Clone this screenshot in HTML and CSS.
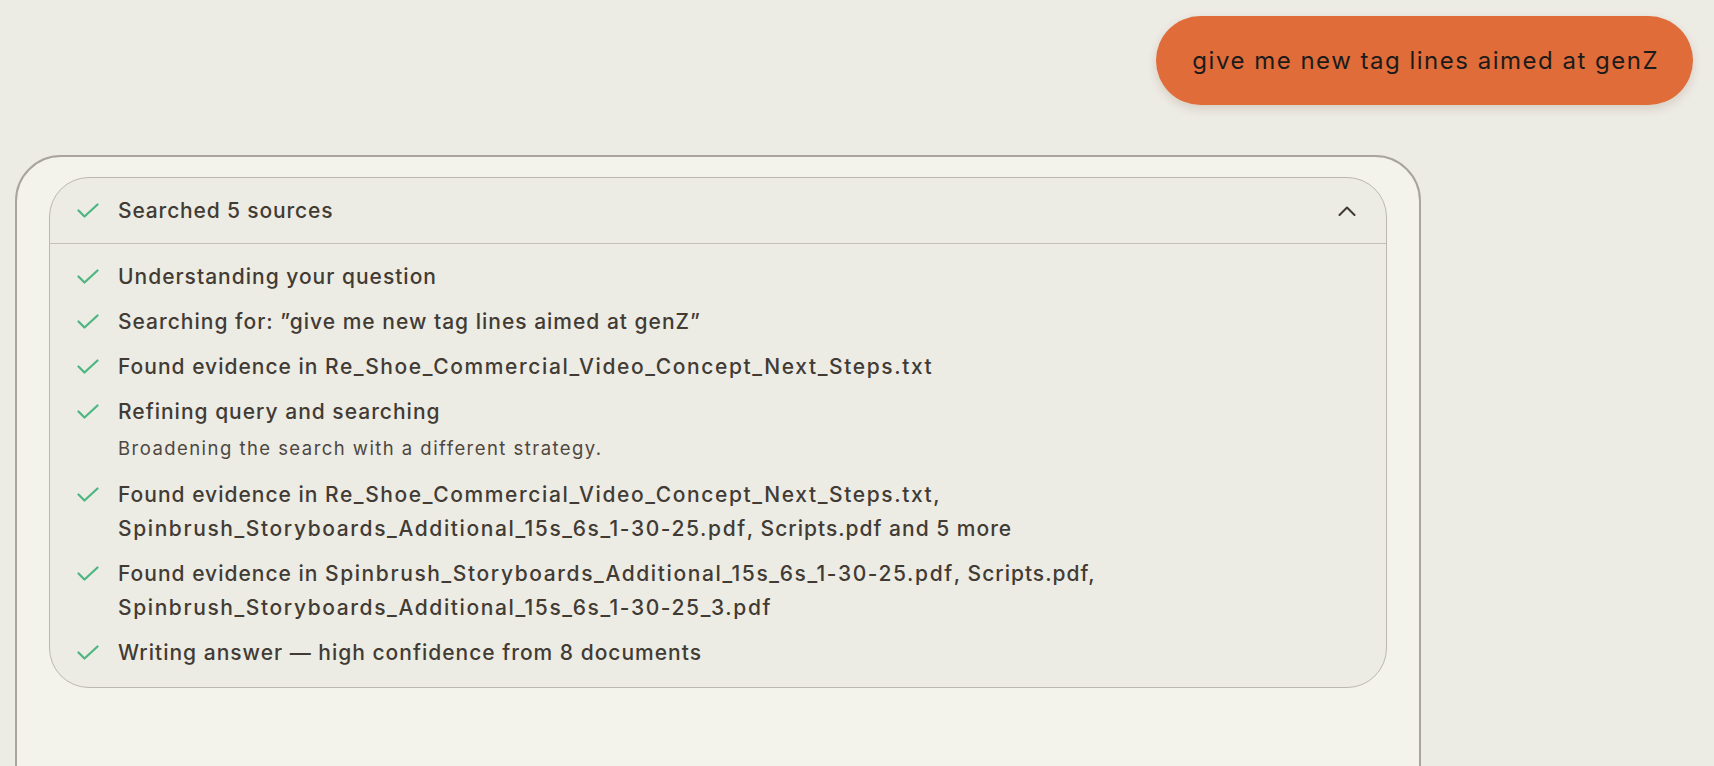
FILE: index.html
```html
<!DOCTYPE html>
<html lang="en">
<head>
<meta charset="utf-8">
<title>Chat</title>
<link rel="stylesheet" href="styles.css">
</head>
<body>
<div class="page">
  <div class="user-row">
    <div class="bubble">give me new tag lines aimed at genZ</div>
  </div>
  <div class="answer-card">
    <div class="steps">
      <div class="steps-head">
        <svg class="check" viewBox="0 0 22 16" width="22" height="16"><path d="M1.5 7.5 L7.5 13.5 L20.5 1.5"/></svg>
        <span class="head-title">Searched 5 sources</span>
        <svg class="chev" viewBox="0 0 18 10" width="18" height="10"><path d="M1.5 9 L9 1.5 L16.5 9"/></svg>
      </div>
      <ul class="step-list">
        <li class="step">
          <svg class="check" viewBox="0 0 22 16" width="22" height="16"><path d="M1.5 7.5 L7.5 13.5 L20.5 1.5"/></svg>
          <div class="step-body"><div class="step-text">Understanding your question</div></div>
        </li>
        <li class="step">
          <svg class="check" viewBox="0 0 22 16" width="22" height="16"><path d="M1.5 7.5 L7.5 13.5 L20.5 1.5"/></svg>
          <div class="step-body"><div class="step-text">Searching for: ”give me new tag lines aimed at genZ”</div></div>
        </li>
        <li class="step">
          <svg class="check" viewBox="0 0 22 16" width="22" height="16"><path d="M1.5 7.5 L7.5 13.5 L20.5 1.5"/></svg>
          <div class="step-body"><div class="step-text">Found evidence in <span class="file">Re_Shoe_Commercial_Video_Concept_Next_Steps.txt</span></div></div>
        </li>
        <li class="step">
          <svg class="check" viewBox="0 0 22 16" width="22" height="16"><path d="M1.5 7.5 L7.5 13.5 L20.5 1.5"/></svg>
          <div class="step-body">
            <div class="step-text">Refining query and searching</div>
            <div class="step-sub">Broadening the search with a different strategy.</div>
          </div>
        </li>
        <li class="step">
          <svg class="check" viewBox="0 0 22 16" width="22" height="16"><path d="M1.5 7.5 L7.5 13.5 L20.5 1.5"/></svg>
          <div class="step-body"><div class="step-text">Found evidence in <span class="file">Re_Shoe_Commercial_Video_Concept_Next_Steps.txt</span>,<br><span class="file">Spinbrush_Storyboards_Additional_15s_6s_1-30-25.pdf</span>, Scripts.pdf and 5 more</div></div>
        </li>
        <li class="step">
          <svg class="check" viewBox="0 0 22 16" width="22" height="16"><path d="M1.5 7.5 L7.5 13.5 L20.5 1.5"/></svg>
          <div class="step-body"><div class="step-text">Found evidence in <span class="file">Spinbrush_Storyboards_Additional_15s_6s_1-30-25.pdf</span>, Scripts.pdf,<br><span class="file">Spinbrush_Storyboards_Additional_15s_6s_1-30-25_3.pdf</span></div></div>
        </li>
        <li class="step">
          <svg class="check" viewBox="0 0 22 16" width="22" height="16"><path d="M1.5 7.5 L7.5 13.5 L20.5 1.5"/></svg>
          <div class="step-body"><div class="step-text">Writing answer — high confidence from 8 documents</div></div>
        </li>
      </ul>
    </div>
  </div>
</div>
</body>
</html>
```

FILE: styles.css
```css
* { box-sizing: border-box; }
html, body {
  margin: 0;
  padding: 0;
  background: #ecebe4;
  height: 100%;
  overflow: hidden;
}
body {
  font-family: Inter, "Noto Sans", sans-serif;
  color: #423b34;
}
.page {
  display: flex;
  flex-direction: column;
  padding: 16px 21px 0 15px;
}
.user-row {
  display: flex;
  justify-content: flex-end;
}
.bubble {
  background: #e06c39;
  color: #1d1b19;
  font-size: 24px;
  height: 89px;
  line-height: 89px;
  padding: 0 34px 0 36px;
  border-radius: 45px;
  box-shadow: 0 4px 10px rgba(120, 80, 50, 0.18);
  letter-spacing: 1.5px;
}
.answer-card {
  margin-top: 50px;
  width: 1406px;
  min-height: 700px;
  background: #f3f2eb;
  border: 2px solid #a9a59d;
  border-radius: 46px;
  padding: 20px 32px;
}
.steps {
  background: #ecebe4;
  border: 1.5px solid #bcb8b0;
  border-radius: 40px;
}
.steps-head {
  display: flex;
  align-items: center;
  height: 66px;
  padding: 0 30px 0 27px;
  border-bottom: 1.5px solid #c4c0b7;
}
.head-title {
  flex: 1;
  font-size: 21px;
  font-weight: 500;
  letter-spacing: 0.85px;
  margin-left: 19px;
}
.check {
  flex: none;
  fill: none;
  stroke: #4cb680;
  stroke-width: 2.2;
  stroke-linecap: round;
  stroke-linejoin: round;
}
.chev {
  fill: none;
  stroke: #3f3832;
  stroke-width: 2;
  stroke-linecap: round;
  stroke-linejoin: round;
}
.step-list {
  list-style: none;
  margin: 0;
  padding: 16px 0 17px 27px;
  display: flex;
  flex-direction: column;
  gap: 11px;
}
.step {
  display: flex;
  align-items: flex-start;
}
.step .check {
  margin-top: 9px;
}
.step-body {
  margin-left: 19px;
}
.step-text {
  font-size: 21px;
  font-weight: 500;
  letter-spacing: 1px;
  line-height: 34px;
}
.file {
  letter-spacing: 1.6px;
}
.step-sub {
  font-size: 18.5px;
  line-height: 30px;
  letter-spacing: 1.45px;
  margin: 4px 0 4px;
  color: #4e4740;
}
```
